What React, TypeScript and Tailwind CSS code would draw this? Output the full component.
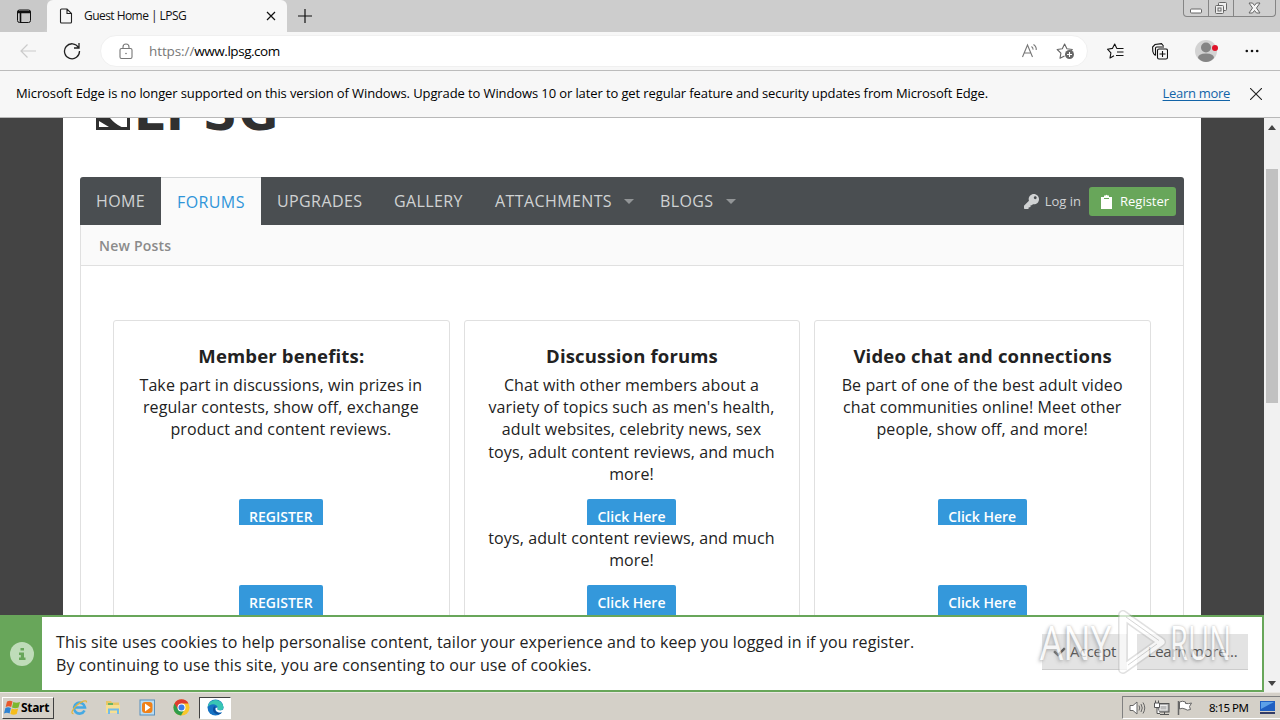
import type { ReactNode } from 'react';
import { FaCheck, FaKey } from 'react-icons/fa';

const cards = [
  {
    title: 'Member benefits:',
    lines: ['Take part in discussions, win prizes in', 'regular contests, show off, exchange', 'product and content reviews.'],
    tail: [],
    button: 'REGISTER',
  },
  {
    title: 'Discussion forums',
    lines: [
      'Chat with other members about a',
      "variety of topics such as men's health,",
      'adult websites, celebrity news, sex',
      'toys, adult content reviews, and much',
      'more!',
    ],
    tail: ['toys, adult content reviews, and much', 'more!'],
    button: 'Click Here',
  },
  {
    title: 'Video chat and connections',
    lines: ['Be part of one of the best adult video', 'chat communities online! Meet other', 'people, show off, and more!'],
    tail: [],
    button: 'Click Here',
  },
];

function TabBar() {
  return (
    <div className="flex h-8 shrink-0 bg-[#cdcdcd]">
      <div className="flex w-[47px] items-center justify-center rounded-br-md bg-[#c9c9c9]">
        <svg width="16" height="16" viewBox="0 0 16 16" fill="none" stroke="#111">
          <rect x="1.5" y="2" width="13" height="12.5" rx="2" />
          <path d="M1.500 3.500h13M2 4.500h12M4.500 5v9.500" strokeWidth="1.600" />
        </svg>
      </div>
      <div className="flex w-60 items-center rounded-t-md bg-[#f7f7f7] pl-3">
        <svg width="14" height="16" viewBox="0 0 14 16" fill="none" stroke="#222" strokeWidth="1.1">
          <path d="M1.500 2a1 1 0 0 1 1-1H8l4.500 4.500V14a1 1 0 0 1-1 1h-9a1 1 0 0 1-1-1zM8 1v4.500h4.500" />
        </svg>
        <span className="ml-[11px] flex-1 whitespace-nowrap text-[12px] tracking-[-0.55px] text-[#111]">Guest Home | LPSG</span>
        <svg className="mr-[11px]" width="10" height="10" viewBox="0 0 10 10" stroke="#111" strokeWidth="1.2">
          <path d="M1 1l8 8M9 1l-8 8" />
        </svg>
      </div>
      <div className="flex w-9 items-center justify-center rounded-bl-md">
        <svg width="16" height="16" viewBox="0 0 16 16" stroke="#111" strokeWidth="1.2">
          <path d="M8 1v14M1 8h14" />
        </svg>
      </div>
      <div className="ml-auto mr-1 flex h-[17px] w-[93px] rounded-b-[4px] border border-t-0 border-[#858585] bg-[#cfcfcf]">
        <div className="flex w-[25px] items-end justify-center border-r border-[#858585] pb-[2px]">
          <svg width="12" height="6" viewBox="0 0 12 6" fill="#fff" stroke="#666">
            <rect x=".5" y="1" width="11" height="4" rx="1" />
          </svg>
        </div>
        <div className="flex w-[25px] items-center justify-center border-r border-[#858585]">
          <svg width="14" height="13" viewBox="0 0 14 13" fill="#eee" stroke="#666">
            <rect x="4.500" y=".5" width="8" height="8" rx="1" />
            <rect x="1.500" y="3.500" width="8" height="8" rx="1" />
            <rect x="4" y="6" width="3" height="3" />
          </svg>
        </div>
        <div className="flex flex-1 items-center justify-center">
          <svg width="13" height="12" viewBox="0 0 13 12" fill="#f4f4f4" stroke="#666">
            <path d="M1 1h3.500l2 2.500 2-2.500H12L8.500 6l3.500 5H8.500l-2-2.500-2 2.500H1l3.500-5z" />
          </svg>
        </div>
      </div>
    </div>
  );
}

function Star({ children }: { children?: ReactNode }) {
  return (
    <svg width="20" height="20" viewBox="0 0 20 20" fill="none" stroke="currentColor" strokeWidth="1.1" strokeLinejoin="round">
      {children}
    </svg>
  );
}

function Toolbar() {
  return (
    <div className="flex h-[39px] shrink-0 items-center border-b border-[#bcbcbc] bg-[#f7f7f7]">
      <svg className="ml-[19px]" width="18" height="16" viewBox="0 0 18 16" fill="none" stroke="#cbcbcb" strokeWidth="1.2">
        <path d="M17 8H2M8.500 1.500L2 8l6.500 6.500" />
      </svg>
      <svg className="ml-[26px]" width="18" height="18" viewBox="0 0 18 18" fill="none" stroke="#222" strokeWidth="1.3">
        <path d="M15.500 5.500A7.500 7.500 0 1 0 16.500 9M16 1v5h-5" />
      </svg>
      <div className="ml-[19px] flex h-8 w-[988px] items-center rounded-full border border-[#f0f0f0] bg-white">
        <svg className="ml-[18px]" width="14" height="17" viewBox="0 0 14 17" fill="none" stroke="#777" strokeWidth="1.1">
          <rect x="1" y="5.500" width="12" height="10" rx="1.500" />
          <path d="M4 5.500V4a3 3 0 0 1 6 0v1.500" />
          <circle cx="7" cy="10.500" r=".8" fill="#777" stroke="none" />
        </svg>
        <span className="ml-4 flex-1 whitespace-nowrap text-[13.500px] tracking-[-0.45px] text-black">
          <span className="tracking-[-0.1px] text-[#777]">https://</span>www.lpsg.com
        </span>
        <svg className="text-[#777]" width="18" height="16" viewBox="0 0 18 16" fill="none" stroke="currentColor" strokeWidth="1.1">
          <path d="M2.500 14L7.500 2l5 12M4.300 10h6.400M11.500 3.500c1.200.8 1.700 2 1.500 3.200M13.500 1.500c2 1.300 3 3.300 2.700 5.500" />
        </svg>
        <div className="ml-[18px] mr-[11px] text-[#666]">
          <Star>
            <path d="M8.500 15L4 17.300l.9-5.200L1.200 8.500l5.100-.8L8.600 3l2.300 4.700 5.400.8-1.600 1.500" />
            <circle cx="13.500" cy="13.500" r="4.500" fill="#666" stroke="none" />
            <path d="M11 13.500h5M13.500 11v5" stroke="#fff" />
          </Star>
        </div>
      </div>
      <div className="ml-[18px] text-[#111]">
        <Star>
          <path d="M8 14.700L4 17l.9-5.200L1.500 8.200l4.900-.8L8.700 3l2 4.200M10.500 7.500h7M11 11h6.500M10 14.500h7.500" />
        </Star>
      </div>
      <svg className="ml-[26px]" width="16" height="17" viewBox="0 0 16 17" fill="none" stroke="#111" strokeWidth="1.1">
        <rect x="5.500" y="6" width="10" height="10" rx="1.500" />
        <path d="M10.500 8v6M7.500 11h6M3.500 12.500C1.500 11 1 10 .8 8.500L.6 4l2.400-2.500 6.500-.8L11.500 3M3.500 12.500V5c0-.8.500-1 1.200-1H12" />
      </svg>
      <svg className="ml-[26px]" width="26" height="24" viewBox="0 0 26 24">
        <circle cx="12" cy="12" r="11" fill="#d3d3d3" />
        <circle cx="12" cy="8.500" r="5" fill="#858585" />
        <path d="M4 19q0-4.500 8-4.500t8 4.500q-3.500 4-8 4t-8-4z" fill="#858585" />
        <circle cx="21" cy="9" r="3" fill="#e0142a" />
      </svg>
      <svg className="ml-[25px]" width="14" height="4" viewBox="0 0 14 4" fill="#111">
        <circle cx="1.800" cy="2" r="1.300" />
        <circle cx="7" cy="2" r="1.300" />
        <circle cx="12.200" cy="2" r="1.300" />
      </svg>
    </div>
  );
}

function SupportNotice() {
  return (
    <div className="flex h-[47px] shrink-0 items-center border-b border-[#b8b8b8] bg-[#f7f7f7] pl-4 pr-[18px] text-[13px] text-black">
      <span className="flex-1 whitespace-nowrap tracking-[-0.108px]">
        Microsoft Edge is no longer supported on this version of Windows. Upgrade to Windows 10 or later to get regular feature and
        security updates from Microsoft Edge.
      </span>
      <a className="tracking-[-0.3px] text-[#1264a8] underline underline-offset-2">Learn more</a>
      <svg className="ml-5" width="12" height="12" viewBox="0 0 12 12" stroke="#222" strokeWidth="1.1">
        <path d="M0 0l12 12M12 0L0 12" />
      </svg>
    </div>
  );
}

function Caret() {
  return (
    <svg className="ml-3" width="10" height="5" viewBox="0 0 10 5" fill="#929597">
      <path d="M0 0h10L5 5z" />
    </svg>
  );
}

function Nav() {
  return (
    <div className="flex h-12 items-center rounded-t-[3px] bg-[#4a4e51] text-[16px] tracking-[0.4px] text-[#d0d2d3]">
      <a className="w-[81px] pl-4">HOME</a>
      <a className="flex h-full w-[100px] items-center border-t border-[#d5d7d8] bg-[#fafafa] pl-4 pt-px text-[#2f95d9]">FORUMS</a>
      <a className="w-[117px] pl-4">UPGRADES</a>
      <a className="w-[101px] pl-4">GALLERY</a>
      <a className="flex w-[165px] items-center pl-4">
        ATTACHMENTS
        <Caret />
      </a>
      <a className="flex items-center pl-4">
        BLOGS
        <Caret />
      </a>
      <div className="ml-auto mr-2 flex items-center pt-px text-[13px] tracking-normal">
        <FaKey className="mr-[6px] h-[15px] w-[15px]" />
        <span className="whitespace-nowrap">Log in</span>
        <a className="ml-2 flex h-[29px] w-[87px] items-center rounded-[3px] bg-[#68a65a] pl-3 text-white">
          <svg className="mr-2" width="11" height="16" viewBox="0 0 11 16" fill="#fff">
            <path d="M0 3h3V1.500h1.500a1.200 1.200 0 0 1 2 0H8V3h3v12H0z" />
            <path d="M3 4.500h5" stroke="#68a65a" />
          </svg>
          Register
        </a>
      </div>
    </div>
  );
}

function Button({ label, className }: { label: string; className: string }) {
  return (
    <div className={`flex shrink-0 justify-center overflow-hidden rounded-t-[2px] bg-[#3498db] text-[14px] font-semibold leading-[36px] text-white ${className}`}>
      {label}
    </div>
  );
}

function Card({ card }: { card: (typeof cards)[number] }) {
  const width = card.button === 'REGISTER' ? 'w-[84px]' : 'w-[89px]';
  return (
    <div className="flex h-[360px] flex-1 flex-col items-center rounded-[3px] border border-[#e0e0e0] pr-px text-[#222]">
      <h3 className="mt-[21px] whitespace-nowrap pl-px text-[18.500px] font-bold leading-7 tracking-[0.16px]">{card.title}</h3>
      <div className="mt-[3.500px] flex h-[125.500px] flex-col items-center whitespace-nowrap text-[16px] leading-[22.360px] tracking-[0.1px]">
        {card.lines.map((line) => (
          <span key={line}>{line}</span>
        ))}
      </div>
      <Button label={card.button} className={`h-[26px] ${width}`} />
      <div className="mt-[2px] flex h-[58px] flex-col items-center whitespace-nowrap text-[16px] leading-[22.360px] tracking-[0.1px]">
        {card.tail.map((line) => (
          <span key={line}>{line}</span>
        ))}
      </div>
      <Button label={card.button} className={`h-9 ${width}`} />
    </div>
  );
}

function Page() {
  return (
    <div className="flex h-[497px] overflow-hidden bg-[#444] pl-[63px]">
      <div className="w-[1138px] bg-white px-[17px]">
        <div className="flex h-[59px] items-start pl-4">
          <svg width="34" height="12" viewBox="0 0 34 12">
            <path d="M0 0h34v12H0z" fill="#303030" />
            <path d="M3 3l10 6H3zM14 0h17v9h-5.500Q19 6 14 0z" fill="#fff" />
          </svg>
          <span className="-mt-[32px] ml-[4px] font-['DejaVu_Sans'] text-[48px] font-bold leading-[54px] tracking-[1.500px] text-[#303030]">LPSG</span>
        </div>
        <Nav />
        <div className="h-[460px] border-x border-[#e0e0e0]">
          <div className="flex h-[41px] items-center border-b border-[#e0e0e0] bg-[#fafafa] pl-[18px] text-[14px] font-semibold tracking-[0.2px] text-[#8b8b8b]">
            New Posts
          </div>
          <div className="flex gap-[14px] pl-8 pr-8 pt-[54px]">
            {cards.map((card) => (
              <Card key={card.title} card={card} />
            ))}
          </div>
        </div>
      </div>
    </div>
  );
}

function Watermark() {
  return (
    <div className="absolute left-[1040px] top-[608px] flex h-[68px] items-center font-['Open_Sans'] text-[47px] font-medium text-white opacity-70 [text-shadow:0_0_3px_#999,-2px_2px_4px_#aaa]">
      <span className="w-[76px] origin-left scale-x-[0.78]">ANY</span>
      <svg width="54" height="68" viewBox="0 0 54 68" fill="none" strokeLinejoin="round">
        <path d="M7 7v54l38-27z" stroke="#b5b5b5" strokeWidth="10" opacity=".6" />
        <path d="M7 7v54l38-27z" stroke="#fff" strokeWidth="7" />
        <path d="M10 9l33 23.500M12 57l29-21" stroke="#c4c4c4" />
      </svg>
      <span className="origin-left scale-x-[0.62]">RUN</span>
    </div>
  );
}

function CookieNotice() {
  return (
    <div className="flex h-[77px] border-2 border-l-0 border-[#68a65a] bg-white">
      <div className="flex w-[42px] items-center justify-center bg-[#68a65a] pl-[2px]">
        <svg width="24" height="24" viewBox="0 0 24 24">
          <circle cx="12" cy="12" r="12" fill="#bfdcb9" />
          <path d="M10.500 6h3.500v2.500h-3.500zM9 10.500h5v5h1.500V18H9v-2.500h1.800V13H9z" fill="#68a65a" />
        </svg>
      </div>
      <div className="ml-[14px] flex-1 whitespace-nowrap pt-[14px] text-[16px] leading-[23px] tracking-[0.111px] text-[#222]">
        This site uses cookies to help personalise content, tailor your experience and to keep you logged in if you register.
        <br />
        By continuing to use this site, you are consenting to our use of cookies.
      </div>
      <div className="mr-[14px] mt-[17px] flex gap-[10px] text-[15px] text-[#555]">
        <a className="flex h-[36px] w-[85px] items-center border-b border-[#ccc] bg-[#e3e3e3] pl-[11px] tracking-[-0.1px]">
          <FaCheck className="mr-1 h-[12px] w-[13px]" />
          Accept
        </a>
        <a className="flex h-[36px] w-[111px] items-center justify-center border-b border-[#ccc] bg-[#e3e3e3] tracking-[-0.25px]">Learn more...</a>
      </div>
    </div>
  );
}

function Scrollbar() {
  return (
    <div className="flex w-4 flex-col items-center bg-[#f1f1f1]">
      <svg className="mt-[7px]" width="8" height="5" viewBox="0 0 8 5" fill="#444">
        <path d="M0 5l4-5 4 5z" />
      </svg>
      <div className="mt-[39px] h-[234px] w-3 bg-[#c1c1c1]" />
      <svg className="mb-[6px] mt-auto" width="8" height="5" viewBox="0 0 8 5" fill="#444">
        <path d="M0 0h8L4 5z" />
      </svg>
    </div>
  );
}

function WindowsFlag() {
  return (
    <svg width="17" height="16" viewBox="0 0 17 16">
      <path d="M3 1.500q3-1.500 5.500 0L7.200 7Q4.500 5.500 1.700 7z" fill="#e8582b" />
      <path d="M9.300 2q3 1.500 6.700 0L14.500 7.500q-3 1.500-6.500 0z" fill="#7cb82f" />
      <path d="M1.400 8Q4 6.600 6.900 8L5.600 13.500Q3 12 0 13.500z" fill="#2f83d2" />
      <path d="M7.700 8.500q3 1.500 6.500 0L12.700 14q-3 1.500-6.300 0z" fill="#f6bd1b" />
    </svg>
  );
}

function Taskbar() {
  return (
    <div className="flex h-7 shrink-0 items-center border-t border-[#e9e7e2] bg-[#d4d0c8] pl-[2px] pt-[2px]">
      <div className="flex h-[22px] w-[52px] items-center border border-b-[#404040] border-l-white border-r-[#404040] border-t-white pl-px">
        <WindowsFlag />
        <span className="font-['Noto_Sans'] text-[12px] font-bold tracking-[-0.3px] text-black">Start</span>
      </div>
      <svg className="ml-[17px]" width="17" height="17" viewBox="0 0 17 17" fill="none">
        <path d="M13.500 11.500A5.500 5.500 0 1 1 14 8.500H4" stroke="#45a9e3" strokeWidth="2.600" />
        <path d="M2.500 14.500C-1 15 2 9.500 6 6S16 0 15.500 3.500" stroke="#e3b53d" strokeWidth="1.300" />
      </svg>
      <svg className="ml-[17px]" width="17" height="17" viewBox="0 0 17 17">
        <path d="M1 2h5l1 1.500h7V13H1z" fill="#e8c765" />
        <path d="M3 4h5v4H3z" fill="#68b466" />
        <path d="M1 6h14v8H1z" fill="#f7df91" />
        <path d="M4 15v-4.500h9V15" stroke="#73bce8" strokeWidth="2" fill="none" />
      </svg>
      <svg className="ml-[17px]" width="17" height="17" viewBox="0 0 17 17">
        <rect x="1" y="1" width="14.500" height="15" fill="#b9dcf3" stroke="#5990bd" />
        <rect x="3" y="3" width="10.500" height="11" rx="3" fill="#f08118" />
        <path d="M6 4.500L11.500 8.500 6 12.500z" fill="#fff" />
      </svg>
      <svg className="ml-[17px]" width="17" height="17" viewBox="0 0 17 17">
        <circle cx="8.500" cy="8.500" r="8" fill="#f9c72b" />
        <path d="M8.500 8.500L1.500 4.500A8 8 0 0 0 8 16.500l3.500-6z" fill="#2e9d4c" />
        <path d="M1.500 4.500a8 8 0 0 1 14 0h-7l-3.400 6z" fill="#de3b2f" />
        <circle cx="8.500" cy="8.500" r="4" fill="#fff" />
        <circle cx="8.500" cy="8.500" r="3" fill="#3b7de8" />
      </svg>
      <div className="ml-[9px] flex h-[22px] w-[32px] items-center justify-center border border-b-white border-l-[#404040] border-r-white border-t-[#404040] bg-white">
        <svg width="17" height="17" viewBox="0 0 17 17">
          <circle cx="8.500" cy="8.500" r="8" fill="#1572c4" />
          <path d="M.6 8A8 8 0 0 1 16.500 8c.3 3-3 4-5.500 3.200-1.300-.4-.3-1.200-.3-2.500C10.500 5 4 3.500.6 8z" fill="#38c6b4" />
          <path d="M7 7.500c-2.500 3.500 0 8 5 7.700l2.500-1.200c-3 .3-6-1-6.500-3.500-.2-1.300.5-2 .5-3z" fill="#0c4e9b" />
          <path d="M10.700 8.500c-.2 1.300-1 1.800.3 2.500 2 .9 4.500.4 5.400-.7v2.500l-3 .8c-3.500 0-5.500-2.500-4.700-4.700z" fill="#fff" />
        </svg>
      </div>
      <div className="ml-auto flex h-[23px] w-[158px] items-center border border-b-white border-l-[#808080] border-r-0 border-t-[#808080] pl-[6px]">
        <svg width="17" height="16" viewBox="0 0 17 16" fill="#fff" stroke="#666">
          <path d="M1 5.500h3L8 2v12l-4-3.500H1z" />
          <path d="M10 5.500q1.500 2.500 0 5M12 4q2.500 4 0 8M14 2.500q3.500 5.500 0 11" fill="none" />
        </svg>
        <svg className="ml-[7px]" width="17" height="16" viewBox="0 0 17 16" fill="#fff" stroke="#555">
          <rect x="5" y="3.500" width="11" height="8.500" fill="#aaa" />
          <rect x="7" y="5.500" width="7" height="4.500" fill="#bbb" stroke="#eee" />
          <path d="M7 14.500h9M11.500 12v2M1.500 3h5v4.500h-5zM2.500.5V3M5.500.5V3M4 7.500v6h3" />
        </svg>
        <svg className="ml-[7px]" width="17" height="16" viewBox="0 0 17 16" fill="#fff" stroke="#666">
          <path d="M2.500 2q3-1.500 6 0v1.500q3 .5 6-.5l-2 3.500 1 3q-3.500 1.500-5.500-.5-3-1.500-5.500 0z" />
          <path d="M1.500 1v14" strokeWidth="1.500" />
        </svg>
        <span className="ml-[15px] w-[51px] whitespace-nowrap font-['Noto_Sans'] text-[11.500px] tracking-[-0.55px] text-black">8:15 PM</span>
        <svg width="15" height="13" viewBox="0 0 15 13">
          <rect x="0" y="0" width="15" height="10" fill="#1e5fc2" />
          <path d="M1 1h13L1 8z" fill="#5ba0e8" />
          <path d="M0 11h15v2H0z" fill="#333c66" />
        </svg>
      </div>
    </div>
  );
}

export default function App() {
  return (
    <div className="relative flex h-[720px] w-[1280px] flex-col overflow-hidden font-['Open_Sans',sans-serif]">
      <TabBar />
      <Toolbar />
      <SupportNotice />
      <div className="flex h-[574px] shrink-0">
        <div className="w-[1264px]">
          <Page />
          <CookieNotice />
        </div>
        <Scrollbar />
      </div>
      <Taskbar />
      <Watermark />
    </div>
  );
}
